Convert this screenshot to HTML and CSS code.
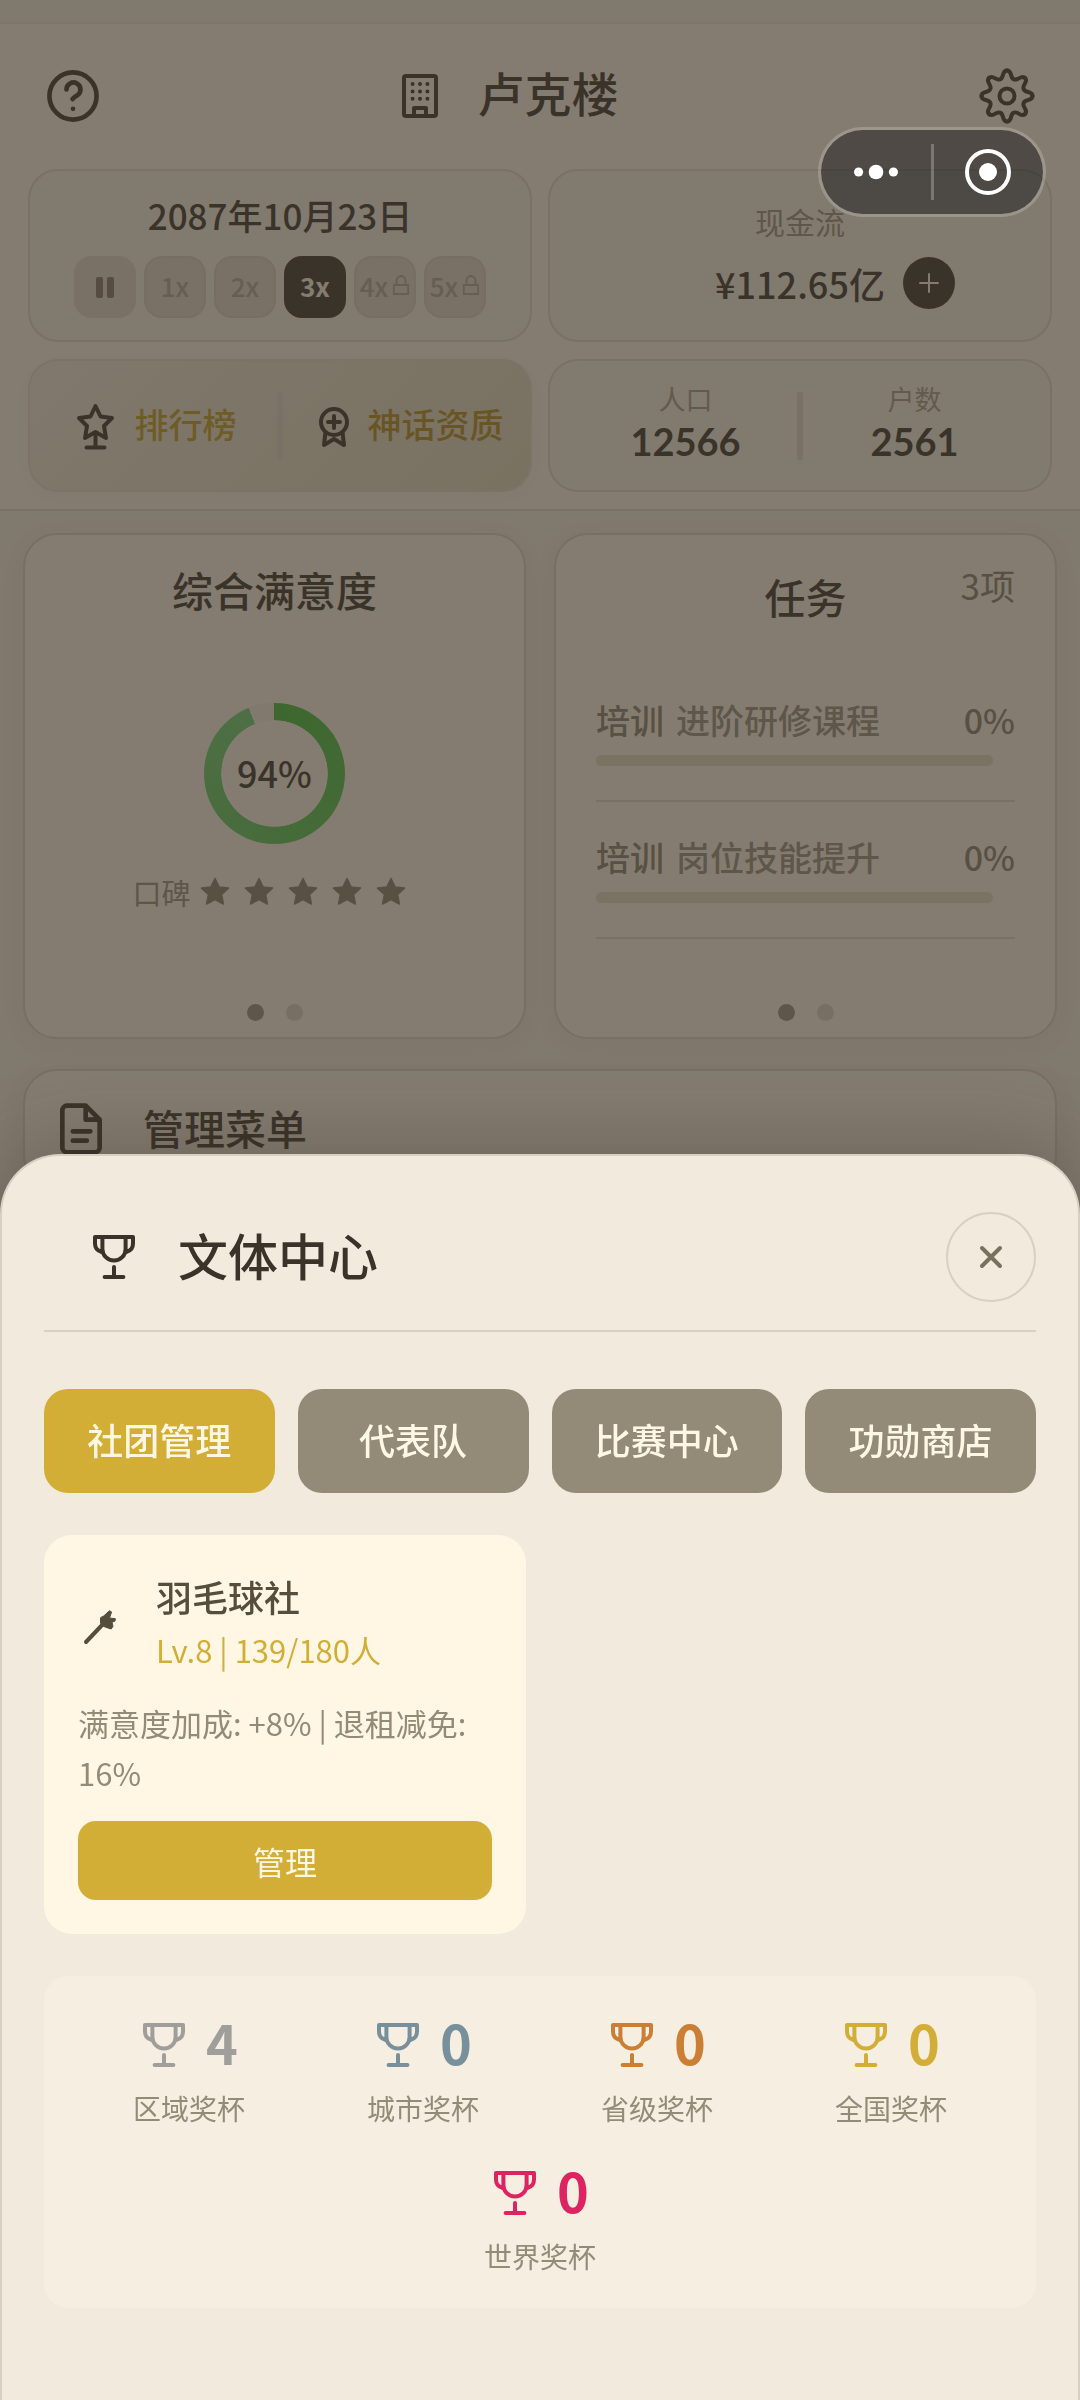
FILE: index.html
```html
<!DOCTYPE html>
<html lang="zh-CN">
<head>
  <meta charset="utf-8">
  <meta name="viewport" content="width=device-width, initial-scale=1">
  <title>卢克楼</title>
  <link rel="stylesheet" href="styles.css">
</head>
<body>
  <!-- Shared icons -->
  <svg class="sprite" aria-hidden="true">
    <symbol id="trophy" viewBox="0 0 24 24">
      <path d="M2.5 2h19v3.3c0 2.2-1.2 3.7-3.3 4.2M2.5 2v3.3c0 2.2 1.2 3.7 3.3 4.2M6.2 2v6a5.8 5.8 0 0 0 11.6 0V2M12 17v5M7.3 22h9.4"/>
    </symbol>
    <symbol id="star" viewBox="0 0 24 24">
      <path d="M12 3l2.7 5.6 6.3.8-4.6 4.3 1.2 6.3L12 17l-5.6 3 1.2-6.3L3 9.400l6.300-.8z"/>
    </symbol>
    <symbol id="lock" viewBox="0 0 20 24">
      <path d="M2 12h16v10H2zM5 12V7a5 5 0 0 1 10 0v5"/>
    </symbol>
  </svg>

  <header class="topbar">
    <div class="title-row">
      <button class="icon-btn" aria-label="帮助">
        <svg class="icon-lg" viewBox="0 0 24 24">
          <circle cx="12" cy="12" r="10.100"/>
          <path d="M9.200 9.200a3 3 0 1 1 4.500 2.600c-1 .6-1.700 1-1.900 1.500"/>
          <path d="M12 17.500h.01"/>
        </svg>
      </button>
      <h1 class="building-name">
        <svg class="icon-md" viewBox="0 0 24 24">
          <rect x="4" y="2" width="16" height="20" rx="1"/>
          <path d="M9 22v-4h6v4M8.300 6h.01M12 6h.01M15.700 6h.01M8.300 9.700h.01M12 9.700h.01M15.700 9.700h.01M8.300 13.400h.01M12 13.400h.01M15.700 13.400h.01"/>
        </svg>
        <span>卢克楼</span>
      </h1>
      <button class="icon-btn" aria-label="设置">
        <svg class="icon-gear" viewBox="-28 -28 56 56">
          <circle r="7.500"/>
          <path id="tooth" d="M0-25.500C5.500-25.500 2.500-18.400 6.890-16.630S14.140-21.920 18.030-18.030"/>
          <use href="#tooth" transform="rotate(45)"/>
          <use href="#tooth" transform="rotate(90)"/>
          <use href="#tooth" transform="rotate(135)"/>
          <use href="#tooth" transform="rotate(180)"/>
          <use href="#tooth" transform="rotate(225)"/>
          <use href="#tooth" transform="rotate(270)"/>
          <use href="#tooth" transform="rotate(315)"/>
        </svg>
      </button>
    </div>

    <div class="stats">
      <section class="stat time">
        <p class="date">2087年10月23日</p>
        <div class="speeds">
          <button class="speed pause" aria-label="暂停"><i></i><i></i></button>
          <button class="speed">1x</button>
          <button class="speed">2x</button>
          <button class="speed active">3x</button>
          <button class="speed">4x<svg class="lock"><use href="#lock"/></svg></button>
          <button class="speed">5x<svg class="lock"><use href="#lock"/></svg></button>
        </div>
      </section>

      <section class="stat cash">
        <p class="cash-label">现金流</p>
        <div class="cash-row">
          <strong>¥112.65亿</strong>
          <button class="plus" aria-label="增加">
            <svg viewBox="0 0 24 24"><path d="M12 3v18M3 12h18"/></svg>
          </button>
        </div>
      </section>

      <section class="stat links">
        <button class="rank">
          <svg class="icon-md" viewBox="0 0 48 48">
            <path d="M24.500 4l5 10.500L41 16l-8 8 2 12-10.500-6L14 36l2-12-8-8 11.500-1.500zM24.500 31v14M15.500 45.500h18"/>
          </svg>
          <span>排行榜</span>
        </button>
        <span class="divider"></span>
        <button class="rank myth">
          <svg class="icon-md" viewBox="0 0 48 48">
            <circle cx="24" cy="20" r="13"/>
            <path d="M24 14v12M18 20h12M15.500 30L14 43l10-6 10 6-1.500-13"/>
          </svg>
          <span>神话资质</span>
        </button>
      </section>

      <section class="stat people">
        <div class="count"><span>人口</span><strong>12566</strong></div>
        <span class="divider"></span>
        <div class="count"><span>户数</span><strong>2561</strong></div>
      </section>
    </div>
  </header>

  <main class="content">
    <div class="cards">
      <section class="card satisfaction">
        <h2>综合满意度</h2>
        <div class="ring"><span>94%</span></div>
        <div class="reputation">
          <span>口碑</span>
          <div class="stars">
            <svg><use href="#star"/></svg>
            <svg><use href="#star"/></svg>
            <svg><use href="#star"/></svg>
            <svg><use href="#star"/></svg>
            <svg><use href="#star"/></svg>
          </div>
        </div>
        <div class="dots"><i class="on"></i><i></i></div>
      </section>

      <section class="card tasks">
        <div class="tasks-head">
          <h2>任务</h2>
          <span class="tasks-count">3项</span>
        </div>
        <ul>
          <li>
            <div class="task-line"><b>培训</b><span>进阶研修课程</span><strong>0%</strong></div>
            <div class="bar"><div class="bar-fill" style="width: 0%"></div></div>
          </li>
          <li>
            <div class="task-line"><b>培训</b><span>岗位技能提升</span><strong>0%</strong></div>
            <div class="bar"><div class="bar-fill" style="width: 0%"></div></div>
          </li>
        </ul>
        <div class="dots"><i class="on"></i><i></i></div>
      </section>
    </div>

    <section class="card menu">
      <svg class="icon-lg" viewBox="0 0 24 24">
        <path d="M14 2H6a2 2 0 0 0-2 2v16a2 2 0 0 0 2 2h12a2 2 0 0 0 2-2V8l-6-6v6h6M8.500 13h7.500M8.500 17h6"/>
      </svg>
      <h2>管理菜单</h2>
    </section>
  </main>

  <div class="mask"></div>

  <section class="sheet" role="dialog" aria-labelledby="sheet-title">
    <div class="sheet-head">
      <svg class="icon-md"><use href="#trophy"/></svg>
      <h2 id="sheet-title">文体中心</h2>
      <button class="close" aria-label="关闭">
        <svg viewBox="0 0 24 24"><path d="M3 3l18 18M21 3L3 21"/></svg>
      </button>
    </div>

    <nav class="tabs">
      <button class="tab active">社团管理</button>
      <button class="tab">代表队</button>
      <button class="tab">比赛中心</button>
      <button class="tab">功勋商店</button>
    </nav>

    <div class="clubs">
      <article class="club">
        <div class="club-head">
          <svg class="club-icon" viewBox="0 -4 44 44">
            <path class="handle" d="M8 37L26 18"/>
            <path d="M26 10.700L31.500 5.700l2.100 1.300-2.100 6 5.900.7-.4 2.300-3 1.300 1 4-1.800 2.700-3.200-1-4.700-1.700-2.800-3.300v-5z"/>
          </svg>
          <div>
            <h3>羽毛球社</h3>
            <p class="level">Lv.8 | 139/180人</p>
          </div>
        </div>
        <p class="effect">满意度加成: +8% | 退租减免: 16%</p>
        <button class="manage">管理</button>
      </article>
    </div>

    <div class="trophies">
      <div class="trophy region">
        <div class="score"><svg class="icon-md"><use href="#trophy"/></svg><b>4</b></div>
        <span>区域奖杯</span>
      </div>
      <div class="trophy city">
        <div class="score"><svg class="icon-md"><use href="#trophy"/></svg><b>0</b></div>
        <span>城市奖杯</span>
      </div>
      <div class="trophy province">
        <div class="score"><svg class="icon-md"><use href="#trophy"/></svg><b>0</b></div>
        <span>省级奖杯</span>
      </div>
      <div class="trophy nation">
        <div class="score"><svg class="icon-md"><use href="#trophy"/></svg><b>0</b></div>
        <span>全国奖杯</span>
      </div>
      <div class="trophy world">
        <div class="score"><svg class="icon-md"><use href="#trophy"/></svg><b>0</b></div>
        <span>世界奖杯</span>
      </div>
    </div>
  </section>

  <!-- Mini program capsule, floats over everything -->
  <div class="capsule">
    <button aria-label="更多">
      <svg viewBox="0 0 48 48" class="solid"><circle cx="5" cy="24" r="5"/><circle cx="24" cy="24" r="8"/><circle cx="43" cy="24" r="5"/></svg>
    </button>
    <span class="capsule-line"></span>
    <button aria-label="退出">
      <svg viewBox="0 0 48 48" class="target"><circle cx="24" cy="24" r="21"/><circle class="core" cx="24" cy="24" r="9"/></svg>
    </button>
  </div>
</body>
</html>
```

FILE: styles.css
```css
:root {
  --ink: #3b3229;
  --page: #e9e0d2;
  --paper: #f2e9dc;
  --line: #d5ccbd;
  --muted: #938a78;
  --gold: #d2ae36;
  --cream: #fff7e4;
}

* {
  box-sizing: border-box;
}

body {
  margin: 0;
  min-height: 100vh;
  padding-top: 22px;
  background: var(--page);
  color: var(--ink);
  font-family: "Noto Sans CJK SC", sans-serif;
}

h1, h2, h3, p, ul {
  margin: 0;
  padding: 0;
  font-weight: 500;
}

button {
  margin: 0;
  padding: 0;
  border: none;
  background: none;
  color: inherit;
  font: inherit;
  cursor: pointer;
}

strong {
  font-weight: 500;
}

svg {
  display: block;
  flex-shrink: 0;
  fill: none;
  stroke: currentColor;
  stroke-width: 2;
  stroke-linecap: round;
  stroke-linejoin: round;
}

.sprite {
  position: absolute;
  width: 0;
  height: 0;
}

.icon-md {
  width: 48px;
  height: 48px;
}

.icon-lg {
  width: 56px;
  height: 56px;
}

/* Header */
.topbar {
  padding: 44px 28px 17px;
  border-top: 2px solid #e2d8c9;
  border-bottom: 2px solid var(--line);
  background: var(--paper);
}

.title-row {
  display: flex;
  justify-content: space-between;
  align-items: center;
  padding: 0 17px;
  margin-bottom: 45px;
}

.icon-gear {
  width: 56px;
  height: 56px;
  stroke-width: 4;
}

.building-name {
  display: flex;
  align-items: center;
  gap: 34px;
  height: 56px;
  padding-right: 66px;
  font-size: 47px;
}

.building-name span {
  padding-bottom: 8px;
  line-height: 56px;
}

.stats {
  display: grid;
  grid-template-columns: 1fr 1fr;
  gap: 17px 16px;
}

.stat {
  border: 2px solid var(--line);
  border-radius: 30px;
  background: #ece3d6;
}

.time {
  display: flex;
  flex-direction: column;
  align-items: center;
  gap: 20px;
  padding: 22px 0;
}

.date {
  font-size: 35px;
  line-height: 43px;
}

.speeds {
  display: flex;
  gap: 8px;
}

.speed {
  display: flex;
  justify-content: center;
  align-items: center;
  gap: 4px;
  width: 62px;
  height: 62px;
  padding-bottom: 4px;
  border: 2px solid #cfc5b5;
  border-radius: 18px;
  background: #d6ccbd;
  color: #a89e8e;
  font-size: 26px;
  font-weight: 500;
}

.speed.active {
  border-color: var(--ink);
  background: var(--ink);
  color: var(--paper);
  font-weight: 700;
}

.speed.pause {
  padding-bottom: 0;
  border-color: #d6ccbd;
}

.pause i {
  width: 7px;
  height: 21px;
  border-radius: 2px;
  background: #7f7462;
}

.lock {
  width: 18px;
  height: 22px;
}

.cash {
  display: flex;
  flex-direction: column;
  justify-content: center;
  align-items: center;
  gap: 18px;
}

.cash-label {
  color: var(--muted);
  font-size: 30px;
  font-weight: 400;
  line-height: 36px;
}

.cash-row {
  display: flex;
  align-items: center;
  gap: 18px;
  padding-left: 70px;
  font-size: 36px;
}

.cash-row strong {
  line-height: 52px;
}

.plus {
  display: flex;
  justify-content: center;
  align-items: center;
  width: 52px;
  height: 52px;
  border-radius: 50%;
  background: var(--ink);
  color: var(--paper);
}

.plus svg {
  width: 24px;
  height: 24px;
}

.links {
  display: flex;
  align-items: center;
  background: linear-gradient(135deg, #e8dfd0, #d7ceb3);
  border-color: #dcd2bd;
  box-shadow: 0 4px 16px rgba(180, 150, 60, 0.08);
}

.rank {
  flex: 1;
  display: flex;
  justify-content: center;
  align-items: center;
  gap: 16px;
  color: #bc9925;
  font-size: 34px;
  font-weight: 500;
  white-space: nowrap;
}

.rank span {
  padding-bottom: 4px;
}

.rank svg {
  color: var(--ink);
  stroke-width: 4;
}

.myth {
  gap: 10px;
  color: #b0881b;
}

.divider {
  width: 6px;
  height: 68px;
  border-radius: 2px;
  background: #d6ccbd;
}

.people {
  display: flex;
  align-items: center;
  padding: 22px 24px;
}

.count {
  flex: 1;
  display: flex;
  flex-direction: column;
  align-items: center;
}

.count span {
  color: #a09482;
  font-size: 27px;
  line-height: 32px;
}

.count strong {
  font-family: Lato, "Noto Sans CJK SC", sans-serif;
  font-size: 38px;
  font-weight: 700;
  line-height: 53px;
}

/* Main page */
.content {
  padding: 22px 23px;
}

.cards {
  display: grid;
  grid-template-columns: 1fr 1fr;
  gap: 28px;
  margin-bottom: 30px;
}

.card {
  border: 2px solid #d1c8b8;
  border-radius: 34px;
  background: var(--paper);
  box-shadow: 0 6px 24px rgba(90, 75, 50, 0.06);
}

.card h2 {
  padding-bottom: 4px;
  font-size: 41px;
  line-height: 52px;
}

.satisfaction,
.tasks {
  display: flex;
  flex-direction: column;
  padding: 28px 40px 16px;
}

.satisfaction {
  align-items: center;
}

.ring {
  display: flex;
  justify-content: center;
  align-items: center;
  width: 141px;
  height: 141px;
  margin: 84px 0 28px;
  border-radius: 50%;
  background: radial-gradient(closest-side, var(--paper) 75%, transparent 76%), conic-gradient(#44b436, #6cc870 94%, #ece0d3 94%);
  font-size: 36px;
  font-weight: 500;
}

.ring span {
  padding-bottom: 4px;
}

.reputation {
  display: flex;
  align-items: center;
  gap: 6px;
  padding-right: 8px;
  color: var(--muted);
  font-size: 29px;
  line-height: 40px;
}

.stars {
  display: flex;
  gap: 8px;
  color: #857a66;
}

.stars svg {
  width: 36px;
  height: 36px;
  fill: currentColor;
  stroke-width: 1;
}

.dots {
  display: flex;
  justify-content: center;
  gap: 22px;
  margin-top: auto;
}

.dots i {
  width: 17px;
  height: 17px;
  border-radius: 50%;
  background: #d2c8b8;
}

.dots .on {
  background: #948977;
}

.tasks-head {
  display: grid;
  grid-template-columns: 1fr auto 1fr;
  align-items: start;
}

.tasks-head h2 {
  grid-column: 2;
  margin-top: 7px;
}

.tasks-count {
  justify-self: end;
  color: #857a66;
  font-size: 35px;
  line-height: 44px;
}

.tasks ul {
  margin: 39px 0 65px;
  list-style: none;
}

.tasks li {
  padding: 32px 0 34px;
  border-bottom: 2px solid var(--line);
}

.task-line {
  display: flex;
  gap: 12px;
  color: #857a66;
  font-size: 34px;
  line-height: 46px;
}

.task-line b {
  font-weight: 500;
}

.task-line span {
  color: var(--muted);
}

.task-line strong {
  margin-left: auto;
}

.bar {
  height: 11px;
  margin: 12px 22px 0 0;
  border-radius: 6px;
  background: #d9cfb9;
}

.bar-fill {
  height: 100%;
  background: var(--gold);
}

.menu {
  display: flex;
  align-items: center;
  gap: 34px;
  padding: 30px 28px;
}

/* Bottom sheet */
.mask {
  position: fixed;
  inset: 0;
  background: rgba(59, 52, 41, 0.6);
}

.sheet {
  position: fixed;
  left: 0;
  right: 0;
  bottom: 0;
  padding: 56px 42px 92px;
  border: 2px solid #d9d0c2;
  border-bottom: none;
  border-radius: 60px 60px 0 0;
  background: #f2eadd;
  box-shadow: 0 -8px 80px rgba(59, 48, 38, 0.3);
}

.sheet-head {
  display: flex;
  align-items: center;
  gap: 40px;
  padding: 0 0 28px 46px;
  border-bottom: 2px solid #d9d0c2;
}

.sheet-head h2 {
  padding-bottom: 6px;
  font-size: 50px;
  line-height: 66px;
}

.close {
  display: flex;
  justify-content: center;
  align-items: center;
  width: 90px;
  height: 90px;
  margin-left: auto;
  border: 2px solid #d9d0c2;
  border-radius: 50%;
  color: #7a705f;
}

.close svg {
  width: 24px;
  height: 24px;
  stroke-width: 4;
}

.tabs {
  display: grid;
  grid-template-columns: repeat(4, 1fr);
  gap: 23px;
  margin-top: 57px;
}

.tab {
  height: 104px;
  padding-bottom: 4px;
  border-radius: 24px;
  background: var(--muted);
  color: var(--cream);
  font-size: 36px;
  font-weight: 500;
}

.tab.active {
  background: var(--gold);
}

.clubs {
  display: grid;
  grid-template-columns: 1fr 1fr;
  gap: 28px;
  margin: 42px 0;
}

.club {
  padding: 34px;
  border-radius: 28px;
  background: var(--cream);
}

.club-head {
  display: flex;
  align-items: center;
  gap: 34px;
}

.club-icon {
  width: 44px;
  height: 44px;
  color: #574d3c;
  fill: currentColor;
  stroke-width: 1;
}

.handle {
  stroke-width: 4;
}

.club h3 {
  color: #574d3c;
  font-size: 36px;
  line-height: 54px;
}

.level {
  color: var(--gold);
  font-size: 31px;
  font-weight: 400;
  line-height: 54px;
}

.effect {
  margin: 21px 0 23px;
  color: var(--muted);
  font-size: 31px;
  font-weight: 400;
  line-height: 50px;
}

.manage {
  display: block;
  width: 100%;
  height: 79px;
  border-radius: 18px;
  background: var(--gold);
  color: var(--cream);
  font-size: 32px;
}

.trophies {
  display: flex;
  flex-wrap: wrap;
  justify-content: center;
  gap: 12px;
  padding: 24px 34px;
  border-radius: 24px;
  background: #f5eee1;
}

.trophy {
  flex: 0 0 calc((100% - 36px) / 4);
  display: flex;
  flex-direction: column;
  align-items: center;
  gap: 10px;
  padding: 12px 0 8px;
}

.score {
  display: flex;
  align-items: center;
  gap: 18px;
  height: 66px;
}

.score b {
  padding-bottom: 6px;
  font-size: 54px;
  font-weight: 700;
  line-height: 60px;
}

.trophy span {
  color: var(--muted);
  font-size: 28px;
  line-height: 40px;
}

.region { color: #a09e9b; }
.city { color: #78909c; }
.province { color: #cb7f35; }
.nation { color: var(--gold); }
.world { color: #dd2361; }

/* Capsule */
.capsule {
  position: absolute;
  top: 127px;
  right: 34px;
  display: flex;
  align-items: center;
  width: 228px;
  height: 90px;
  border: 3px solid rgba(255, 255, 255, 0.2);
  border-radius: 45px;
  background: rgba(20, 20, 20, 0.48);
  background-clip: padding-box;
  color: #fff;
}

.capsule button {
  flex: 1;
  display: flex;
  justify-content: center;
}

.capsule svg {
  width: 48px;
  height: 48px;
}

.capsule .solid {
  width: 44px;
}

.solid,
.core {
  fill: currentColor;
  stroke: none;
}

.target {
  stroke-width: 4;
}

.capsule-line {
  width: 3px;
  height: 56px;
  background: rgba(255, 255, 255, 0.25);
}
```
